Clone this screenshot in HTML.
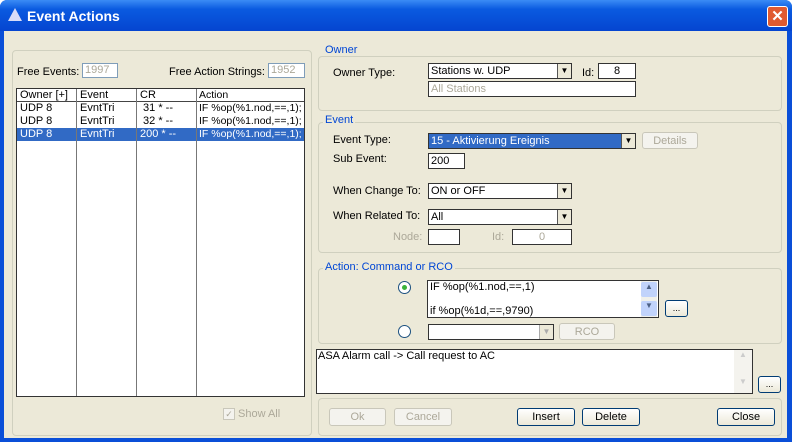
<!DOCTYPE html>
<html><head><style>
*{box-sizing:border-box;margin:0;padding:0}
body{width:800px;height:447px;background:#fff;font-family:"Liberation Sans",sans-serif;font-size:11px;color:#000;position:relative;overflow:hidden}
.a{position:absolute}
.win{left:0;top:0;width:792px;height:442px;background:#0a4fd8;border-radius:7px 7px 0 0}
.title{left:0;top:0;width:792px;height:31px;background:linear-gradient(#3b8cf5,#0a5ae0 30%,#0545d0);border-radius:7px 7px 0 0}
.client{left:4px;top:31px;width:783px;height:407px;background:#ece9d8}
.grp{border:1px solid #d0d0bf;border-radius:4px}
.gl{background:#ece9d8;color:#0046d5;padding:0 2px}
.box{background:#fff;border:1px solid #7f9db9}
.box2{background:#fff;border:1px solid #333}
.btn{border:1px solid #003c74;border-radius:3px;background:linear-gradient(#fff,#ece9d8);text-align:center;line-height:17px}
.dis{border:1px solid #c9c7ba;border-radius:3px;background:#f4f3ee;color:#aca899;text-align:center;line-height:16px}
.dd{position:absolute;right:0;top:0;width:14px;height:100%;border-left:1px solid #555;background:#ece9d8;font-size:8px;text-align:center;line-height:14px}
.gray{color:#aca899}
.col{line-height:13px}
</style></head><body>
<div class="a win"></div>
<div class="a title"></div>
<div class="a" style="left:8px;top:8px;width:0;height:0;border-left:7px solid transparent;border-right:7px solid transparent;border-bottom:13px solid #d8dcf8"></div>
<div class="a" style="left:27px;top:8px;color:#fff;font-weight:bold;font-size:14px">Event Actions</div>
<div class="a" style="left:767px;top:6px;width:21px;height:21px;background:#e05a30;border:1px solid #fff;border-radius:3px;color:#fff;font-weight:bold;text-align:center;line-height:19px;font-size:15px">✕</div>
<div class="a client"></div>

<!-- left group -->
<div class="a grp" style="left:12px;top:50px;width:300px;height:386px"></div>
<div class="a" style="left:17px;top:66px">Free Events:</div>
<div class="a box gray" style="left:82px;top:63px;width:36px;height:15px;padding-left:2px">1997</div>
<div class="a" style="left:169px;top:66px">Free Action Strings:</div>
<div class="a box gray" style="left:268px;top:63px;width:37px;height:15px;padding-left:2px">1952</div>
<div class="a box2" style="left:16px;top:88px;width:289px;height:309px"></div>
<div class="a" style="left:17px;top:89px;width:287px;height:13px;border-bottom:1px solid #444"></div>
<div class="a" style="left:17px;top:128px;width:287px;height:13px;background:#316ac5"></div>
<div class="a" style="left:76px;top:89px;width:1px;height:307px;background:#777"></div>
<div class="a" style="left:136px;top:89px;width:1px;height:307px;background:#777"></div>
<div class="a" style="left:196px;top:89px;width:1px;height:307px;background:#777"></div>
<div class="a col" style="left:20px;top:89px">Owner [+]<br>UDP 8<br>UDP 8<br><span style="color:#fff">UDP 8</span></div>
<div class="a col" style="left:80px;top:89px">Event<br>EvntTri<br>EvntTri<br><span style="color:#fff">EvntTri</span></div>
<div class="a col" style="left:140px;top:89px">CR<br>&nbsp;31 * --<br>&nbsp;32 * --<br><span style="color:#fff">200 * --</span></div>
<div class="a col" style="left:199px;top:89px;font-size:10.5px">Action<br>IF %op(%1.nod,==,1);<br>IF %op(%1.nod,==,1);<br><span style="color:#fff">IF %op(%1.nod,==,1);</span></div>
<div class="a" style="left:223px;top:408px;width:12px;height:12px;border:1px solid #c9c7ba;background:#f4f3ee;color:#aca899;font-size:9px;text-align:center;line-height:10px">✓</div>
<div class="a gray" style="left:238px;top:408px">Show All</div>

<!-- owner -->
<div class="a grp" style="left:318px;top:56px;width:464px;height:55px"></div>
<div class="a gl" style="left:323px;top:44px">Owner</div>
<div class="a" style="left:333px;top:67px">Owner Type:</div>
<div class="a box2" style="left:428px;top:63px;width:144px;height:16px;padding-left:2px;line-height:14px">Stations w. UDP<div class="dd">▼</div></div>
<div class="a" style="left:582px;top:67px">Id:</div>
<div class="a box2" style="left:598px;top:63px;width:38px;height:16px;text-align:center;line-height:14px">8</div>
<div class="a box2 gray" style="left:428px;top:81px;width:208px;height:16px;padding-left:2px;line-height:14px">All Stations</div>

<!-- event -->
<div class="a grp" style="left:318px;top:122px;width:464px;height:131px"></div>
<div class="a gl" style="left:323px;top:114px">Event</div>
<div class="a" style="left:333px;top:134px">Event Type:</div>
<div class="a box2" style="left:428px;top:133px;width:208px;height:16px;line-height:14px"><div style="background:#316ac5;color:#fff;width:192px;height:14px;padding-left:2px">15 - Aktivierung Ereignis</div><div class="dd">▼</div></div>
<div class="a dis" style="left:642px;top:132px;width:56px;height:17px">Details</div>
<div class="a" style="left:333px;top:153px">Sub Event:</div>
<div class="a box2" style="left:428px;top:153px;width:37px;height:16px;padding-left:2px;line-height:14px">200</div>
<div class="a" style="left:333px;top:185px">When Change To:</div>
<div class="a box2" style="left:428px;top:183px;width:144px;height:16px;padding-left:2px;line-height:14px">ON or OFF<div class="dd">▼</div></div>
<div class="a" style="left:333px;top:210px">When Related To:</div>
<div class="a box2" style="left:428px;top:209px;width:144px;height:16px;padding-left:2px;line-height:14px">All<div class="dd">▼</div></div>
<div class="a gray" style="left:393px;top:231px">Node:</div>
<div class="a box2" style="left:428px;top:229px;width:32px;height:16px"></div>
<div class="a gray" style="left:492px;top:231px">Id:</div>
<div class="a box2 gray" style="left:512px;top:229px;width:60px;height:16px;text-align:center;line-height:14px">0</div>

<!-- action -->
<div class="a grp" style="left:318px;top:268px;width:464px;height:76px"></div>
<div class="a gl" style="left:323px;top:261px">Action: Command or RCO</div>
<div class="a" style="left:398px;top:281px;width:13px;height:13px;border:1px solid #1c5180;border-radius:50%;background:#fff"><div style="margin:3px;width:5px;height:5px;border-radius:50%;background:#3ab33a"></div></div>
<div class="a box2" style="left:427px;top:280px;width:232px;height:38px;padding-left:2px;line-height:12px">IF %op(%1.nod,==,1)<br><br>if %op(%1d,==,9790)</div>
<div class="a" style="left:641px;top:281px;width:16px;height:36px;background:#f0f0ea"><div style="height:15px;margin-top:1px;background:#c1d3fb;border-radius:2px;font-size:8px;text-align:center;color:#4d6185">▲</div><div style="height:15px;margin-top:4px;background:#c1d3fb;border-radius:2px;font-size:8px;text-align:center;color:#4d6185">▼</div></div>
<div class="a btn" style="left:665px;top:300px;width:23px;height:17px;font-size:9px;line-height:15px">...</div>
<div class="a" style="left:398px;top:325px;width:13px;height:13px;border:1px solid #1c5180;border-radius:50%;background:#fff"></div>
<div class="a box2" style="left:428px;top:324px;width:126px;height:16px"><div class="dd" style="border-left:1px solid #aaa;color:#aaa">▼</div></div>
<div class="a dis" style="left:559px;top:323px;width:56px;height:17px">RCO</div>

<div class="a box2" style="left:316px;top:349px;width:437px;height:45px;padding-left:1px;line-height:12px">ASA Alarm call -&gt; Call request to AC</div>
<div class="a" style="left:734px;top:350px;width:18px;height:43px;background:#f4f3ee;color:#ccc;font-size:8px;text-align:center">▲<br><br><br>▼</div>
<div class="a btn" style="left:758px;top:376px;width:23px;height:17px;font-size:9px;line-height:15px">...</div>

<div class="a grp" style="left:318px;top:398px;width:464px;height:38px"></div>
<div class="a dis" style="left:329px;top:408px;width:57px;height:18px">Ok</div>
<div class="a dis" style="left:394px;top:408px;width:58px;height:18px">Cancel</div>
<div class="a btn" style="left:517px;top:408px;width:58px;height:18px">Insert</div>
<div class="a btn" style="left:582px;top:408px;width:58px;height:18px">Delete</div>
<div class="a btn" style="left:717px;top:408px;width:58px;height:18px">Close</div>
</body></html>
